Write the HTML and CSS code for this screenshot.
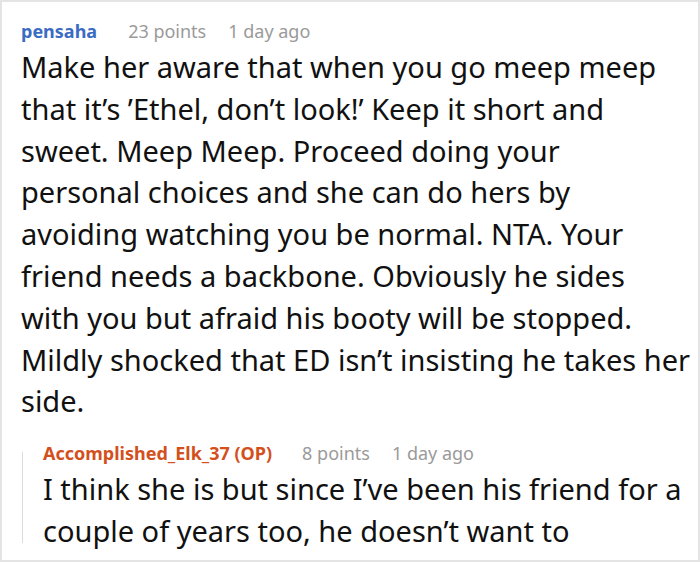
FILE: index.html
```html
<!DOCTYPE html>
<html>
<head>
<meta charset="utf-8">
<link rel="stylesheet" href="styles.css">
</head>
<body>
<div class="frame">
  <div class="comment">
    <div class="meta">
      <span class="author">pensaha</span>
      <span class="info">23 points</span>
      <span class="info">1 day ago</span>
    </div>
    <p class="text">Make her aware that when you go meep meep<br>that it’s ’Ethel, don’t look!’ Keep it short and<br>sweet. Meep Meep. Proceed doing your<br>personal choices and she can do hers by<br>avoiding watching you be normal. NTA. Your<br>friend needs a backbone. Obviously he sides<br>with you but afraid his booty will be stopped.<br>Mildly shocked that ED isn’t insisting he takes her<br>side.</p>
    <div class="reply">
      <div class="thread"></div>
      <div class="reply-body">
        <div class="meta">
          <span class="author op">Accomplished_Elk_37 (OP)</span>
          <span class="info">8 points</span>
          <span class="info">1 day ago</span>
        </div>
        <p class="text">I think she is but since I’ve been his friend for a<br>couple of years too, he doesn’t want to</p>
      </div>
    </div>
  </div>
</div>
</body>
</html>
```

FILE: styles.css
```css
html, body {
  margin: 0;
  padding: 0;
  background: #fff;
}
.frame {
  width: 700px;
  height: 562px;
  box-sizing: border-box;
  border: 2px solid #e4e4e4;
  overflow: hidden;
  font-family: "Noto Sans", "Open Sans", sans-serif;
}
.comment {
  padding: 17px 2px 0 19px;
}
.meta {
  display: flex;
  align-items: baseline;
  font-size: 18px;
  line-height: 24px;
  white-space: nowrap;
}
.author {
  color: #3a6cc3;
  font-weight: 700;
  margin-right: 31px;
}
.info {
  color: #9a9a9a;
  margin-right: 22px;
}
.author.op {
  color: #d3501d;
  margin-right: 30px;
}
.text {
  margin: 3px 0 0;
  font-size: 29px;
  line-height: 41.8px;
  color: #111;
  white-space: nowrap;
}
.reply {
  display: flex;
  align-items: flex-start;
  margin-top: 19px;
}
.thread {
  flex: none;
  width: 1px;
  height: 91px;
  margin: 11px 0 0 1px;
  background: #dcdcdc;
}
.reply-body {
  flex: 1;
  padding-left: 20px;
}
```
